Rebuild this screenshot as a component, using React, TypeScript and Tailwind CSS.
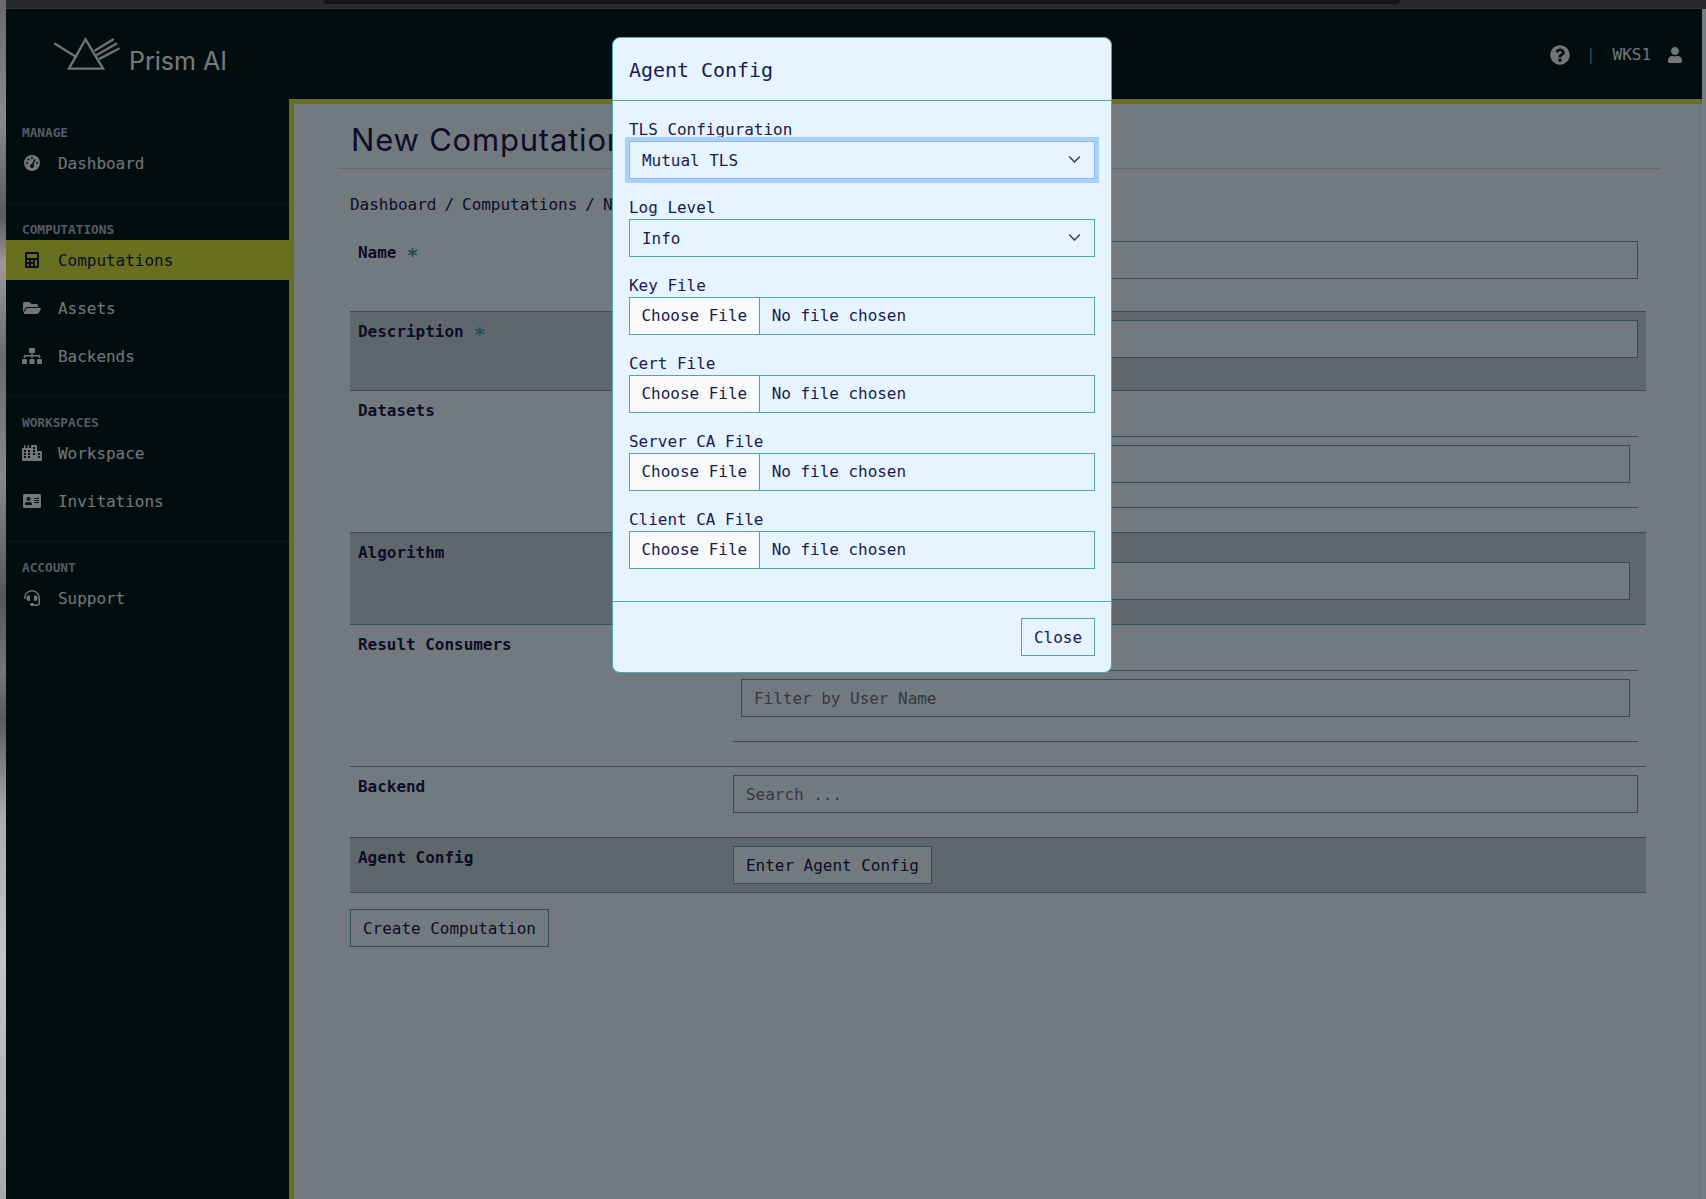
import React from "react";
import { FaCalculator, FaFolderOpen, FaSitemap, FaCity, FaAddressCard, FaHeadset, FaQuestionCircle, FaUser } from "react-icons/fa";
import { FaGaugeHigh } from "react-icons/fa6";

const MONO = "font-['DejaVu_Sans_Mono','Liberation_Mono',monospace]";

function NavItem({ icon, label, active }: { icon: React.ReactNode; label: string; active?: boolean }) {
  return (
    <div className={`flex h-10 items-center pl-4 text-base ${active ? "bg-[#cce03e] text-[#1a1a50]" : "text-[#e4ecf2]"}`}>
      <span className="flex w-5 shrink-0 justify-center [&>svg]:h-4 [&>svg]:w-5">{icon}</span>
      <span className="ml-4 pt-[2px]">{label}</span>
    </div>
  );
}

function Section({ title, children, last }: { title: string; children: React.ReactNode; last?: boolean }) {
  return (
    <div className={`flex flex-col ${last ? "" : "border-b border-[#1c2a2e] pb-5"}`}>
      <div className="mb-[3px] h-4 pl-4 text-[12.8px] font-bold leading-[18px] text-[#aab4c6]">{title}</div>
      <div className="flex flex-col gap-2">{children}</div>
    </div>
  );
}

function Row({ label, req, alt, h, children }: { label: string; req?: boolean; alt?: boolean; h: string; children?: React.ReactNode }) {
  return (
    <div className={`flex border-b border-[#55a6ac] ${alt ? "bg-[#c0ced9]" : ""} ${h}`}>
      <div className="w-[375px] shrink-0 px-2 pt-2 text-base font-bold leading-6 text-[#1a1a50]">
        {label}
        {req && <span className="ml-[10px] align-[-4px] text-[20px] leading-4 text-[#4fa0a8]">*</span>}
      </div>
      <div className="min-w-0 flex-1 px-2">{children}</div>
    </div>
  );
}

function Field({ placeholder }: { placeholder?: string }) {
  return (
    <input
      readOnly
      placeholder={placeholder}
      className={`h-[38px] w-full border border-[#55a6ac] bg-[#e5f4ff] px-3 pt-px text-base text-[#1a1a50] outline-none placeholder:text-[#6c757d] ${MONO}`}
    />
  );
}

function Chooser({ placeholder }: { placeholder: string }) {
  return (
    <div className="flex flex-col">
      <div className="box-content h-[45px] border-b border-[#55a6ac]" />
      <div className="px-2 pb-6 pt-2">
        <Field placeholder={placeholder} />
      </div>
      <div className="border-t border-[#55a6ac]" />
    </div>
  );
}

function OutlineButton({ children }: { children: React.ReactNode }) {
  return <button className={`h-[38px] border border-[#55a6ac] bg-[#e5f4ff] px-3 pt-[2px] text-base text-[#1a1a50] ${MONO}`}>{children}</button>;
}

function ModalSelect({ label, value, focus }: { label: string; value: string; focus?: boolean }) {
  return (
    <div className="mb-4">
      <div className="h-6 text-base leading-[26px]">{label}</div>
      <div className="relative">
        <select
          defaultValue={value}
          className={`h-[38px] w-full appearance-none border bg-[#e5f4ff] px-3 pt-[2px] text-base text-[#1a1a50] outline-none ${MONO} ${focus ? "border-[#8fb8fb] ring-4 ring-[#abd2ff]" : "border-[#55a6ac]"}`}
        >
          <option>{value}</option>
        </select>
        <svg viewBox="0 0 16 16" className="pointer-events-none absolute right-[14px] top-[12px] h-[13px] w-[13px]" fill="none" stroke="#343a40" strokeWidth="1.8" strokeLinecap="round" strokeLinejoin="round">
          <path d="M2 5l6 6 6-6" />
        </svg>
      </div>
    </div>
  );
}

function ModalFile({ label }: { label: string }) {
  return (
    <div className="mb-4">
      <div className="h-6 text-base leading-[26px]">{label}</div>
      <input
        type="file"
        className={`block h-[38px] w-full border border-[#55a6ac] bg-[#e5f4ff] text-base leading-9 text-[#1a1a50] file:mr-3 file:h-full file:border-0 file:border-r file:border-solid file:border-[#55a6ac] file:bg-[#f8fafc] file:px-[11.5px] file:text-base file:text-[#1a1a50] ${MONO} file:font-['DejaVu_Sans_Mono','Liberation_Mono',monospace]`}
      />
    </div>
  );
}

export default function App() {
  return (
    <div className={`flex h-[1199px] w-[1706px] overflow-hidden tracking-[-0.03px] ${MONO}`}>
      <div className="w-[6px] shrink-0 bg-[linear-gradient(180deg,#6a6a6a_0%,#8a8a8a_10%,#5a5a5a_18%,#9a9a9a_22%,#6a6a6a_30%,#888_40%,#555_50%,#777_56%,#5a5a5a_60%,#aaa_68%,#c4c4c4_80%,#a8a8a8_100%)]" />
      <div className="relative flex min-w-0 flex-1 flex-col">
        {/* browser edge */}
        <div className="h-[9px] shrink-0 border-b border-[#35353c] bg-[#28282e]">
          <div className="ml-[317px] h-1 w-[1077px] rounded-b-md bg-[#141417]" />
        </div>

        <div className="relative flex min-h-0 flex-1 flex-col">
          {/* top navigation */}
          <header className="flex h-[90px] shrink-0 items-center justify-between bg-[#041a20]">
            <div className="ml-[43px] mt-[1px] flex items-end">
              <svg viewBox="25 35 220 105" className="h-[35px] w-[73px] shrink-0" fill="none" stroke="#e6e6e6" strokeWidth="7" strokeLinecap="round" strokeLinejoin="miter">
                <path d="M43 55 L107 95" />
                <path d="M135 42 L85 130 L188 130 Z" />
                <path d="M165 75 L218 42 M170 88 L228 55 M178 100 L235 70" />
              </svg>
              <span className="-mb-[2px] ml-[7px] text-[25px] leading-[26px] tracking-normal text-[#f2f2f2] font-['Inter',sans-serif]">Prism AI</span>
            </div>
            <div className="mr-[19px] mt-[1px] flex items-center text-base text-[#e4ecf2]">
              <FaQuestionCircle className="text-[20px]" />
              <span className="ml-4 text-[#5a9ad0]">|</span>
              <span className="ml-[17px] pt-px">WKS1</span>
              <FaUser className="ml-4 text-[16px]" />
            </div>
          </header>

          <div className="flex min-h-0 flex-1">
            {/* sidebar */}
            <aside className="flex w-[283px] shrink-0 flex-col gap-[17px] bg-[#041a20] pt-[25px]">
              <Section title="MANAGE">
                <NavItem icon={<FaGaugeHigh />} label="Dashboard" />
              </Section>
              <Section title="COMPUTATIONS">
                <NavItem icon={<FaCalculator />} label="Computations" active />
                <NavItem icon={<FaFolderOpen />} label="Assets" />
                <NavItem icon={<FaSitemap />} label="Backends" />
              </Section>
              <Section title="WORKSPACES">
                <NavItem icon={<FaCity />} label="Workspace" />
                <NavItem icon={<FaAddressCard />} label="Invitations" />
              </Section>
              <Section title="ACCOUNT" last>
                <NavItem icon={<FaHeadset />} label="Support" />
              </Section>
            </aside>

            {/* main */}
            <main className="min-w-0 flex-1 border-l-[5px] border-t-[5px] border-[#cce03e] bg-[#e5f4ff] pl-[44px] pr-[42px]">
              <div className="flex h-[65px] items-end border-b border-[#d0d0d0] pb-[8px] pl-[13px]">
                <h1 className="whitespace-nowrap text-[31px] leading-10 tracking-[0.8px] text-[#1a1a50] font-['Inter',sans-serif]">New Computation</h1>
              </div>
              <div className="ml-3 w-[1296px]">
                <div className="mt-[23px] flex h-6 text-base leading-[26px] text-[#1a1a50]">
                  <span>Dashboard</span>
                  <span className="mx-2">/</span>
                  <span>Computations</span>
                  <span className="mx-2">/</span>
                  <span>New</span>
                </div>
                <div className="mt-[17px] flex flex-col">
                  <Row label="Name" req h="h-[79px]">
                    <div className="pt-2"><Field /></div>
                  </Row>
                  <Row label="Description" req alt h="h-[79px]">
                    <div className="pt-2"><Field /></div>
                  </Row>
                  <Row label="Datasets" h="h-[142px]">
                    <Chooser placeholder="" />
                  </Row>
                  <Row label="Algorithm" alt h="h-[92px]">
                    <div className="px-2 pt-[29px]"><Field /></div>
                  </Row>
                  <Row label="Result Consumers" h="h-[142px]">
                    <Chooser placeholder="Filter by User Name" />
                  </Row>
                  <Row label="Backend" h="h-[71px]">
                    <div className="pt-2"><Field placeholder="Search ..." /></div>
                  </Row>
                  <Row label="Agent Config" alt h="h-[55px]">
                    <div className="pt-2"><OutlineButton>Enter Agent Config</OutlineButton></div>
                  </Row>
                </div>
                <div className="mt-4"><OutlineButton>Create Computation</OutlineButton></div>
              </div>
            </main>
          </div>
        </div>

        {/* backdrop */}
        <div className="absolute inset-x-0 bottom-0 top-[9px] bg-black/50" />
      </div>
      <div className="w-[4px] shrink-0 border-t-[9px] border-[#28282e] bg-[#767d83]" />

      {/* modal */}
      <div className="absolute left-[612px] top-[37px] w-[500px] rounded-lg border border-[#55a6ac] bg-[#e5f4ff] text-[#1a1a50]">
        <div className="flex h-[63px] items-center border-b border-[#55a6ac] px-4 pt-[2px] text-xl">Agent Config</div>
        <div className="p-4">
          <ModalSelect label="TLS Configuration" value="Mutual TLS" focus />
          <ModalSelect label="Log Level" value="Info" />
          <ModalFile label="Key File" />
          <ModalFile label="Cert File" />
          <ModalFile label="Server CA File" />
          <ModalFile label="Client CA File" />
        </div>
        <div className="flex justify-end border-t border-[#55a6ac] p-4">
          <OutlineButton>Close</OutlineButton>
        </div>
      </div>
    </div>
  );
}
